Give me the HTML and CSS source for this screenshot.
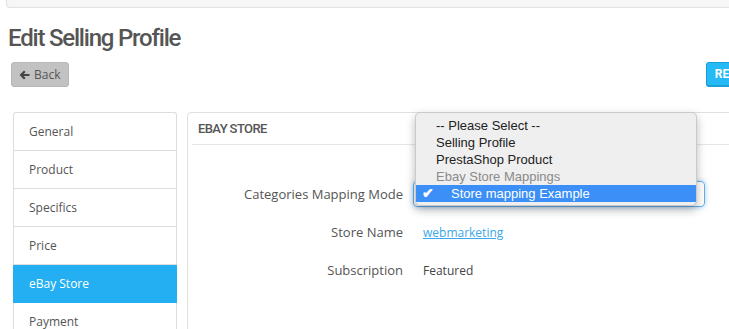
FILE: index.html
```html
<!DOCTYPE html>
<html lang="en">
<head>
  <meta charset="UTF-8">
  <meta name="viewport" content="width=device-width, initial-scale=1.0">
  <title>Edit Selling Profile</title>
  <link rel="stylesheet" href="styles.css">
</head>
<body>

  <div class="top-bar"></div>

  <div class="page">
    <h1>Edit Selling Profile</h1>

    <div class="toolbar">
      <button class="btn-back">
        <svg width="11" height="10" viewBox="0 0 11 10"><path d="M5 0.5 L0.6 5 L5 9.5 L6.6 8 L4.6 6.1 H10.5 V3.9 H4.6 L6.6 2 Z" fill="#444"/></svg>
        Back
      </button>
      <button class="btn-primary">RESET</button>
    </div>

    <div class="layout">
      <ul class="tabs">
        <li>General</li>
        <li>Product</li>
        <li>Specifics</li>
        <li>Price</li>
        <li class="active">eBay Store</li>
        <li>Payment</li>
      </ul>

      <div class="panel">
        <div class="panel-heading">eBay Store</div>

        <div class="form">
          <div class="form-row">
            <label>Categories Mapping Mode</label>
            <div class="select-wrap">
              <div class="select">
                <span class="arrows">&#8661;</span>
              </div>
              <ul class="dropdown">
                <li>-- Please Select --</li>
                <li>Selling Profile</li>
                <li>PrestaShop Product</li>
                <li class="group">Ebay Store Mappings</li>
                <li class="selected"><span class="check">&#10004;</span>Store mapping Example</li>
              </ul>
            </div>
          </div>

          <div class="form-row">
            <label>Store Name</label>
            <a class="value" href="#">webmarketing</a>
          </div>

          <div class="form-row">
            <label>Subscription</label>
            <span class="value">Featured</span>
          </div>
        </div>
      </div>
    </div>
  </div>

</body>
</html>
```

FILE: styles.css
```css
html {
  overflow: hidden;
}

body {
  margin: 0;
  font-family: 'Open Sans', Arial, sans-serif;
  color: #555;
  background-color: #fff;
}

.top-bar {
  height: 7px;
  margin-left: 6px;
  width: 900px;
  background-color: #f6f6f6;
  border-left: 1px solid #e2e2e2;
  border-bottom: 1px solid #e2e2e2;
  border-bottom-left-radius: 4px;
}

.page {
  width: 752px;
  padding-left: 8px;
}

h1 {
  font-family: Roboto, sans-serif;
  font-weight: 500;
  font-size: 24px;
  line-height: 29px;
  letter-spacing: -1.2px;
  color: #555;
  margin: 16px 0 0;
}

.toolbar {
  display: flex;
  justify-content: space-between;
  align-items: flex-start;
  margin-top: 9px;
  padding-left: 3px;
}

.btn-back {
  display: flex;
  align-items: center;
  gap: 4px;
  height: 25px;
  padding: 0 8px 0 7px;
  background-color: #c2c2c2;
  border: 1px solid #b8b8b8;
  border-radius: 3px;
  font-family: 'Open Sans', sans-serif;
  font-size: 12px;
  color: #555;
}

.btn-primary {
  height: 25px;
  padding: 0 8px;
  background-color: #25b9f5;
  border: 1px solid #1a9fd6;
  border-bottom-width: 2px;
  border-radius: 3px;
  font-family: Roboto, sans-serif;
  font-weight: 700;
  font-size: 12px;
  color: #fff;
}

.layout {
  display: flex;
  align-items: flex-start;
  gap: 10px;
  margin-top: 25px;
  padding-left: 5px;
}

.tabs {
  list-style: none;
  margin: 0;
  padding: 0;
  width: 162px;
  border: 1px solid #ddd;
  border-bottom: none;
  border-radius: 3px 3px 0 0;
}

.tabs li {
  height: 37px;
  line-height: 37px;
  padding-left: 15px;
  font-size: 12px;
  border-bottom: 1px solid #ddd;
}

.tabs li.active {
  background-color: #24aff2;
  color: #fff;
  margin: 0 -1px;
  padding-left: 16px;
  height: 38px;
  border-bottom: none;
}

.panel {
  flex: 1;
  height: 240px;
  padding: 0 4px;
  border: 1px solid #e0e0e0;
  border-radius: 4px;
}

.panel-heading {
  height: 31px;
  line-height: 31px;
  padding-left: 6px;
  border-bottom: 1px solid #e6e6e6;
  font-family: Roboto, sans-serif;
  font-weight: 500;
  font-size: 13px;
  letter-spacing: -0.6px;
  text-transform: uppercase;
  color: #555;
}

.form {
  display: flex;
  flex-direction: column;
  gap: 12px;
  padding-top: 36px;
}

.form-row {
  display: flex;
  align-items: center;
  gap: 10px;
  height: 26px;
}

.form-row label {
  width: 211px;
  text-align: right;
  font-size: 13px;
  color: #555;
}

.value {
  padding-left: 10px;
  font-size: 12px;
  color: #444;
}

a.value {
  color: #3aa8ea;
}

.select-wrap {
  position: relative;
}

.select {
  display: flex;
  align-items: center;
  justify-content: flex-end;
  box-sizing: border-box;
  width: 292px;
  height: 26px;
  padding: 0 6px 0 10px;
  border: 1px solid #66afe9;
  border-radius: 4px;
  box-shadow: 0 0 5px rgba(102, 175, 233, 0.6);
  font-size: 12px;
  color: #555;
}

.arrows {
  font-size: 10px;
  color: #666;
}

.dropdown {
  position: absolute;
  top: -69px;
  left: 2px;
  width: 282px;
  margin: 0;
  padding: 4px 0 3px;
  list-style: none;
  box-sizing: border-box;
  background-color: #efefef;
  border: 1px solid #cacaca;
  border-radius: 5px;
  box-shadow: 0 4px 10px rgba(0, 0, 0, 0.28);
  font-family: 'Liberation Sans', Arial, sans-serif;
  font-size: 13px;
  color: #222;
}

.dropdown li {
  height: 17px;
  line-height: 17px;
  padding-left: 20px;
}

.dropdown li.group {
  color: #8a8a8a;
}

.dropdown li.selected {
  position: relative;
  padding-left: 35px;
  background-color: #3b8ff6;
  color: #fff;
}

.check {
  position: absolute;
  left: 6px;
  font-size: 14px;
  font-weight: 700;
}
```
